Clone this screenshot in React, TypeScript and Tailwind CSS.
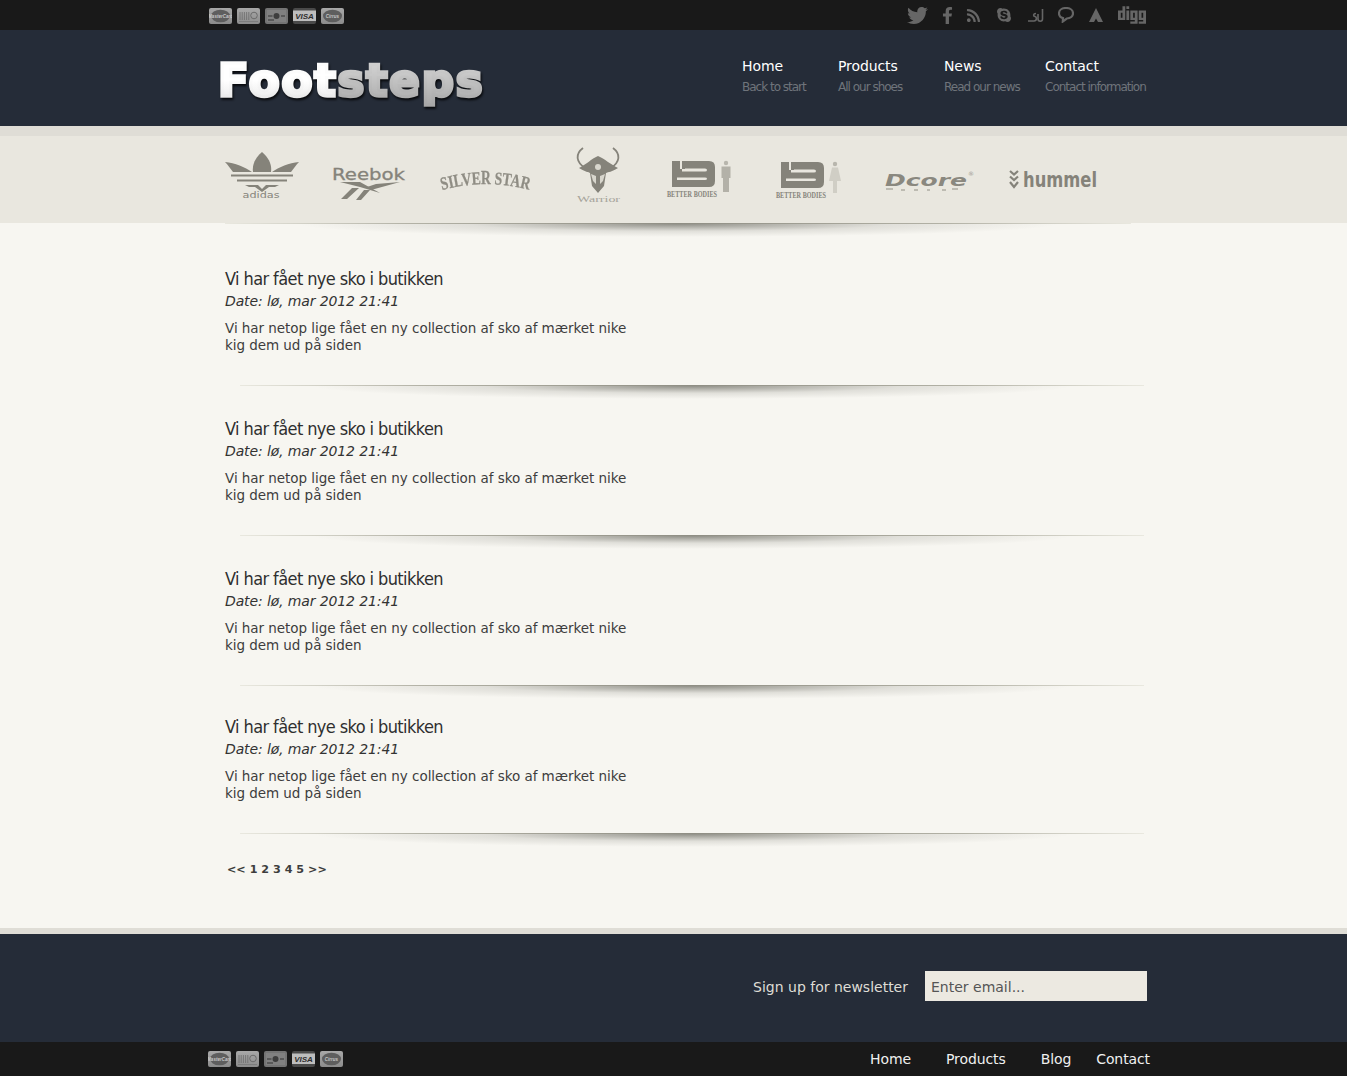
import React from "react";
import { FaTwitter, FaFacebookF, FaSkype, FaRss, FaDigg } from "react-icons/fa";

function Card({ kind, id }: { kind: number; id: string }) {
  return (
    <svg width="23" height="16" viewBox="0 0 23 16" className="block">
      <defs>
        <linearGradient id={id} x1="0" y1="0" x2="0" y2="1">
          <stop offset="0" stopColor="#a8a8a8" />
          <stop offset="1" stopColor="#8c8c8c" />
        </linearGradient>
      </defs>
      <rect x="0" y="0" width="23" height="16" rx="2" fill={kind === 2 ? "#747474" : kind === 3 ? "#4a4a4a" : `url(#${id})`} />
      {(kind === 0 || kind === 4) && (
        <>
          <ellipse cx="11.500" cy="8" rx="9.500" ry="6.300" fill="#5e5e5e" />
          <text x="11.500" y="9.500" textAnchor="middle" fontSize="4.500" fontStyle="italic" fontWeight="700" fontFamily="Liberation Sans, sans-serif" fill="#c8c8c8">
            {kind === 0 ? "MasterCard" : "Cirrus"}
          </text>
        </>
      )}
      {kind === 1 && (
        <>
          <path d="M3 4v8M5.200 4v8M7.400 4v8M9.600 4v8M11.800 4v8" stroke="#6b6b6b" strokeWidth="0.800" />
          <circle cx="17" cy="7.500" r="3.300" fill="none" stroke="#6b6b6b" />
          <path d="M2 13.500h19" stroke="#777" strokeWidth="0.800" />
        </>
      )}
      {kind === 2 && (
        <>
          <rect x="2" y="2" width="19" height="12" fill="#808080" />
          <circle cx="11.500" cy="8" r="3" fill="#3d3d3d" />
          <path d="M3 8h4.500M16 8h4M3 12h6" stroke="#333" />
        </>
      )}
      {kind === 3 && (
        <>
          <rect x="0" y="2.500" width="23" height="10.500" fill="#bdbdbd" />
          <text x="11.500" y="11" textAnchor="middle" fontSize="8" fontStyle="italic" fontWeight="700" fontFamily="Liberation Sans, sans-serif" fill="#2d2d2d">VISA</text>
        </>
      )}
    </svg>
  );
}

function Cards({ prefix }: { prefix: string }) {
  return (
    <div className="flex gap-[5px]">
      {[0, 1, 2, 3, 4].map((k) => (
        <Card key={k} kind={k} id={`${prefix}${k}`} />
      ))}
    </div>
  );
}

function Divider({ className }: { className: string }) {
  return (
    <div className={`h-[14px] ${className}`}>
      <div className="h-px bg-[linear-gradient(to_right,#e9e8df,#b3b2a6_20%,#8f8e84_50%,#b3b2a6_80%,#e9e8df)]" />
      <div className="h-[13px] bg-[radial-gradient(ellipse_42%_100%_at_50%_0%,rgba(60,60,50,0.55),rgba(60,60,50,0.12)_55%,transparent_100%)]" />
    </div>
  );
}

function Article({ className }: { className: string }) {
  return (
    <article className={className}>
      <h2 className="font-['DejaVu_Sans_Condensed','DejaVu_Sans',sans-serif] text-[18px] leading-[22px] tracking-[-0.6px] text-[#2f2f2f] font-normal">Vi har fået nye sko i butikken</h2>
      <p className="text-[14px] leading-[22px] tracking-[-0.12px] italic text-[#333]">Date: lø, mar 2012 21:41</p>
      <p className="mt-[8px] text-[13.500px] leading-[17px] tracking-[-0.05px] text-[#3d3d3d]">
        Vi har netop lige fået en ny collection af sko af mærket nike
        <br />
        kig dem ud på siden
      </p>
    </article>
  );
}

function NavItem({ title, sub, className }: { title: string; sub: string; className: string }) {
  return (
    <div className={className}>
      <div className="text-[14px] leading-[20px] tracking-[-0.1px] text-white">{title}</div>
      <div className="mt-[1px] whitespace-nowrap text-[12px] leading-[20px] tracking-[-1px] text-[#6f747b]">{sub}</div>
    </div>
  );
}

const logoFill = "#85837a";

function Adidas() {
  return (
    <svg width="74" height="48" viewBox="0 0 74 48" className="block overflow-visible">
      <path d="M37 0C30 6 27 13 28 20H46C47 13 44 6 37 0Z" fill={logoFill} />
      <path d="M0 10C10 11 20 15 27 20H8C5 16 3 13 0 10Z" fill={logoFill} />
      <path d="M74 10C64 11 54 15 47 20H66C69 16 71 13 74 10Z" fill={logoFill} />
      <path d="M6 23.500H68M12 28.500H62" stroke={logoFill} strokeWidth="2" />
      <path d="M20 33H33L37 37L41 33H54L50 35H44L37 40L30 35H24Z" fill={logoFill} />
      <text x="36" y="46" textAnchor="middle" fontSize="9" textLength="37" lengthAdjust="spacingAndGlyphs" fontFamily="DejaVu Sans, sans-serif" fill={logoFill}>adidas</text>
    </svg>
  );
}

function Reebok() {
  return (
    <svg width="74" height="36" viewBox="0 0 74 36" className="block overflow-visible">
      <text x="0" y="13" fontSize="16" textLength="73" lengthAdjust="spacingAndGlyphs" stroke={logoFill} strokeWidth="0.300" fontFamily="DejaVu Sans, sans-serif" fill={logoFill}>Reebok</text>
      <path d="M8 15H28L48 26L28 20Z" fill={logoFill} />
      <path d="M68 15L44 17L35 20L39 23Z" fill={logoFill} />
      <path d="M9 32L20 21H27L15 32ZM24 33L32 23H38L29 33Z" fill={logoFill} />
    </svg>
  );
}

function SilverStar() {
  return (
    <svg width="90" height="30" viewBox="0 0 90 30" className="block overflow-visible blur-[0.4px]">
      <defs>
        <path id="silver-arc" d="M1 26Q45 14 89 26" fill="none" />
      </defs>
      <text fontSize="18" fontWeight="700" stroke="#8f8d84" strokeWidth="0.300" fontFamily="Liberation Serif, serif" fill="#8f8d84">
        <textPath href="#silver-arc" textLength="88" lengthAdjust="spacingAndGlyphs">SILVER STAR</textPath>
      </text>
    </svg>
  );
}

function Warrior() {
  return (
    <svg width="47" height="56" viewBox="0 0 47 56" className="block overflow-visible">
      <path d="M8 0C0 6 1 14 10 20M38 0C46 6 45 14 36 20" fill="none" stroke={logoFill} strokeWidth="1.800" />
      <path d="M23 8C16 11 12 16 4 20C10 24 14 24 15 25L17 38L23 45L29 38L31 25C33 24 37 24 43 20C35 16 30 11 23 8Z" fill={logoFill} />
      <path d="M16 26L21 28V36L18 33ZM30 26L25 28V36L28 33Z" fill="#d8d6cd" />
      <circle cx="23" cy="19" r="3" fill="#d8d6cd" />
      <text x="23.500" y="54" textAnchor="middle" fontSize="9" textLength="43" lengthAdjust="spacingAndGlyphs" fontFamily="Liberation Serif, serif" fill="#a5a39a">Warrior</text>
    </svg>
  );
}

function Better({ woman }: { woman?: boolean }) {
  return (
    <svg width="66" height="40" viewBox="0 0 66 40" className="block overflow-visible">
      <path
        d="M5 1H13V9H15V1H42Q48 1 48 7V21Q48 27 42 27H5ZM15 9V11.500H38Q40 11.500 40 10Q40 8.500 38 8.500H18V9ZM10 17.500V20H38Q40 20 40 18.750Q40 17.500 38 17.500Z"
        fill={logoFill}
        fillRule="evenodd"
      />
      <circle cx="59" cy="3" r="2.200" fill="#b8b6ad" />
      {woman ? (
        <path d="M56 6.500H62L65 20H61V32H57V20H53Z" fill="#d0cec5" />
      ) : (
        <path d="M54.500 6.500H63.500V18H62V32H56V18H54.500Z" fill="#b3b1a8" />
      )}
      <text x="0" y="37" fontSize="7.500" fontWeight="700" textLength="50" lengthAdjust="spacingAndGlyphs" fontFamily="Liberation Serif, serif" fill={logoFill}>BETTER BODIES</text>
    </svg>
  );
}

function Dcore() {
  return (
    <svg width="90" height="24" viewBox="0 0 90 24" className="block overflow-visible">
      <text x="1" y="16" fontSize="16" fontWeight="700" fontStyle="italic" textLength="82" lengthAdjust="spacingAndGlyphs" fontFamily="DejaVu Sans, sans-serif" fill="#8a887f">Dcore</text>
      <text x="84" y="6" fontSize="6" fontFamily="DejaVu Sans, sans-serif" fill="#9a988f">®</text>
      <path d="M2 19H9M17 20H21M30 20H34M43 20H46M58 20H62M68 19H74" stroke="#bdbbb2" strokeWidth="2" />
    </svg>
  );
}

function Hummel() {
  return (
    <svg width="90" height="20" viewBox="0 0 90 20" className="block overflow-visible">
      <path d="M1 1L5 4.500L9 1M1 6.500L5 10L9 6.500M1 12L5 17L9 12" fill="none" stroke={logoFill} strokeWidth="2.200" />
      <text x="14" y="17" fontSize="22" fontWeight="700" textLength="74" lengthAdjust="spacingAndGlyphs" fontFamily="DejaVu Sans, sans-serif" fill={logoFill}>hummel</text>
    </svg>
  );
}

const icon = "#666666";

export default function App() {
  return (
    <div className="min-h-[1076px] bg-[#f7f6f1] font-['DejaVu_Sans',sans-serif]">
      <div className="h-[30px] bg-[#191919]">
        <div className="ml-[208px] flex h-[30px] w-[939px] items-center justify-between">
          <div className="ml-px mt-px"><Cards prefix="t" /></div>
          <div className="flex items-center text-[#666]">
            <span className="flex w-[30px] justify-center"><FaTwitter size={21} /></span>
            <span className="flex w-[30px] justify-center"><FaFacebookF size={17} /></span>
            <span className="flex w-[23px] justify-center"><FaRss size={15} /></span>
            <span className="flex w-[37px] justify-center"><FaSkype size={16} /></span>
            <span className="flex w-[26px] justify-center">
              <svg width="17" height="15" viewBox="0 0 17 15" className="block">
                <path d="M1 13H7C10 13 10 9 8 8.500C6 8 6 5.500 9 5.500M11 6V11C11 14 15.500 14 15.500 11V1" fill="none" stroke={icon} strokeWidth="1.600" />
              </svg>
            </span>
            <span className="flex w-[36px] justify-center">
              <svg width="16" height="16" viewBox="0 0 16 16" className="block">
                <path d="M8 1C3.800 1 1 3.300 1 6.300C1 8.800 3 10.600 5 11.100L4.800 14.500L8.800 11.500C12.500 11.500 15 9.300 15 6.300C15 3.300 12.200 1 8 1Z" fill="none" stroke={icon} strokeWidth="2.200" />
              </svg>
            </span>
            <span className="flex w-[24px] justify-center">
              <svg width="14" height="14" viewBox="0 0 14 14" className="block">
                <path d="M7 0L14 14H9L7 10.500L5 14H0Z" fill={icon} />
              </svg>
            </span>
            <span className="ml-[8px] flex w-[31px] justify-center"><FaDigg size={28} /></span>
          </div>
        </div>
      </div>

      <header className="h-[96px] bg-[#252c38]">
        <div className="ml-[208px] flex h-[96px] w-[939px]">
          <div className="ml-[10px] mt-[19px] whitespace-nowrap text-[45px] leading-[64px] font-bold tracking-[1.800px] drop-shadow-[1px_2px_1px_rgba(0,0,0,0.8)]">
            <span className="bg-[linear-gradient(to_bottom,#ffffff_50%,#e2e2e2)] bg-clip-text text-transparent [-webkit-text-stroke:3.500px_rgba(0,0,0,0.01)]">Foot</span>
            <span className="bg-[linear-gradient(to_bottom,#dcdcdc,#a8a8a8)] bg-clip-text text-transparent [-webkit-text-stroke:3.500px_rgba(0,0,0,0.01)]">steps</span>
          </div>
          <nav className="ml-auto mt-[26px] flex">
            <NavItem title="Home" sub="Back to start" className="w-[96px]" />
            <NavItem title="Products" sub="All our shoes" className="w-[106px]" />
            <NavItem title="News" sub="Read our news" className="w-[101px]" />
            <NavItem title="Contact" sub="Contact information" className="w-[102px]" />
          </nav>
        </div>
      </header>

      <div className="h-[10px] bg-[#dfddd6]" />

      <div className="h-[87px] bg-[#e9e7df]">
        <div className="ml-[225px] flex h-[87px] items-start">
          <div className="mt-[16px] w-[107px]"><Adidas /></div>
          <div className="mt-[31px] w-[109px]"><Reebok /></div>
          <div className="mt-[28px] w-[134px]"><SilverStar /></div>
          <div className="mt-[12px] w-[92px]"><Warrior /></div>
          <div className="mt-[24px] w-[109px]"><Better /></div>
          <div className="mt-[25px] w-[108px]"><Better woman /></div>
          <div className="mt-[34px] w-[125px]"><Dcore /></div>
          <div className="mt-[34px]"><Hummel /></div>
        </div>
      </div>

      <main className="ml-[225px] w-[922px] pb-[50px]">
        <Divider className="w-[906px]" />
        <Article className="mt-[31px]" />
        <Divider className="ml-[15px] mt-[31px] w-[904px]" />
        <Article className="mt-[19px]" />
        <Divider className="ml-[15px] mt-[31px] w-[904px]" />
        <Article className="mt-[19px]" />
        <Divider className="ml-[15px] mt-[31px] w-[904px]" />
        <Article className="mt-[17px]" />
        <Divider className="ml-[15px] mt-[31px] w-[904px]" />
        <div className="ml-[2px] mt-[15px] text-[11.200px] leading-[16px] font-bold text-[#3d3d3d]">&lt;&lt; 1 2 3 4 5 &gt;&gt;</div>
      </main>

      <div className="h-[6px] bg-[#dfddd6]" />

      <div className="flex h-[108px] items-start justify-end bg-[#252c38] pr-[200px]">
        <div className="mt-[37px] flex items-start">
          <span className="pt-[1px] text-[14px] leading-[30px] text-[#dfddd6]">Sign up for newsletter</span>
          <input
            className="ml-[17px] h-[30px] w-[222px] bg-[#ece9e1] px-[6px] pt-[1px] font-['DejaVu_Sans',sans-serif] text-[14px] text-[#555] outline-none placeholder:text-[#555]"
            placeholder="Enter email..."
          />
        </div>
      </div>

      <footer className="h-[34px] bg-[#191919]">
        <div className="ml-[208px] flex h-[34px] w-[942px] items-center justify-between">
          <Cards prefix="b" />
          <nav className="flex text-[14px] leading-[20px] tracking-[-0.1px] text-[#f0f0f0]">
            <span>Home</span>
            <span className="ml-[35px]">Products</span>
            <span className="ml-[35px]">Blog</span>
            <span className="ml-[25px]">Contact</span>
          </nav>
        </div>
      </footer>
    </div>
  );
}
